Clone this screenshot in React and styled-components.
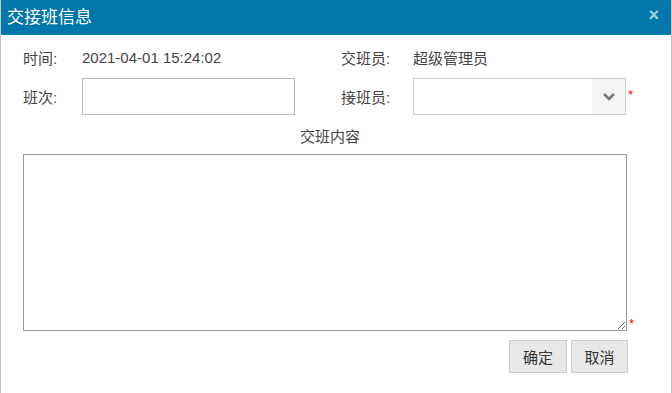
import styled, { createGlobalStyle } from "styled-components";

const GlobalStyle = createGlobalStyle`
  html, body {
    margin: 0;
    padding: 0;
    background: #fff;
  }
  body {
    font-family: "Liberation Sans", "Noto Sans CJK SC", sans-serif;
    font-size: 15px;
    color: #333;
  }
`;

const Dialog = styled.div`
  width: 672px;
  height: 393px;
  box-sizing: border-box;
  border-left: 1px solid #c8c8c8;
  border-right: 1px solid #c8c8c8;
  display: flex;
  flex-direction: column;
`;

const Header = styled.div`
  height: 35px;
  flex: none;
  background: #0077aa;
  display: flex;
  align-items: center;
  justify-content: space-between;
  padding: 0 12px 0 6px;
  box-sizing: border-box;
`;

const Title = styled.div`
  color: #fff;
  font-size: 17px;
  margin-top: -5px;
`;

const Close = styled.div`
  color: #a8d0e2;
  font-size: 18px;
  font-weight: bold;
  margin-top: -4px;
`;

const Body = styled.div`
  padding: 10px 0 0 22px;
  display: flex;
  flex-direction: column;
`;

const Row = styled.div`
  display: flex;
  align-items: center;
  height: ${(p) => p.$h}px;
  margin-top: ${(p) => p.$mt || 0}px;
`;

const Label = styled.div`
  width: ${(p) => p.$w}px;
  margin-left: ${(p) => p.$ml || 0}px;
  color: #444;
`;

const Value = styled.div`
  width: 213px;
  color: #444;
`;

const TextInput = styled.input`
  width: 213px;
  height: 37px;
  box-sizing: border-box;
  border: 1px solid #bbb;
  outline: none;
  padding: 0 6px;
  font: inherit;
`;

const Select = styled.div`
  width: 213px;
  height: 37px;
  box-sizing: border-box;
  border: 1px solid #ccc;
  display: flex;
  justify-content: flex-end;
`;

const Arrow = styled.div`
  width: 33px;
  background: #f5f5f5;
  display: flex;
  align-items: center;
  justify-content: center;
`;

const Star = styled.span`
  color: #f00;
  font-size: 13px;
  margin-left: 2px;
  align-self: flex-start;
  margin-top: ${(p) => p.$mt}px;
`;

const SectionTitle = styled.div`
  width: 604px;
  padding-left: 5px;
  text-align: center;
  line-height: 20px;
  margin-top: 12px;
  color: #444;
`;

const AreaRow = styled.div`
  display: flex;
  margin-top: 7px;
`;

const Area = styled.textarea`
  width: 604px;
  height: 177px;
  box-sizing: border-box;
  border: 1px solid #999;
  outline: none;
  resize: both;
  font: inherit;
  margin: 0;
`;

const Footer = styled.div`
  width: 605px;
  display: flex;
  justify-content: flex-end;
  gap: 4px;
  margin-top: 9px;
`;

const Button = styled.button`
  width: ${(p) => p.$w}px;
  height: 33px;
  background: #e8e8e8;
  border: 1px solid #ccc;
  font: inherit;
  color: #333;
  padding: 0;
`;

export default function App() {
  return (
    <>
      <GlobalStyle />
      <Dialog>
        <Header>
          <Title>交接班信息</Title>
          <Close>×</Close>
        </Header>
        <Body>
          <Row $h={24}>
            <Label $w={59}>时间:</Label>
            <Value>2021-04-01 15:24:02</Value>
            <Label $w={72} $ml={46}>交班员:</Label>
            <Value>超级管理员</Value>
          </Row>
          <Row $h={37} $mt={9}>
            <Label $w={59}>班次:</Label>
            <TextInput />
            <Label $w={72} $ml={46}>接班员:</Label>
            <Select>
              <Arrow>
                <svg width="14" height="9" viewBox="0 0 14 9">
                  <path d="M2 2 L7 7 L12 2" fill="none" stroke="#777" strokeWidth="2.6" />
                </svg>
              </Arrow>
            </Select>
            <Star $mt={9}>*</Star>
          </Row>
          <SectionTitle>交班内容</SectionTitle>
          <AreaRow>
            <Area />
            <Star $mt={162}>*</Star>
          </AreaRow>
          <Footer>
            <Button $w={58}>确定</Button>
            <Button $w={57}>取消</Button>
          </Footer>
        </Body>
      </Dialog>
    </>
  );
}
